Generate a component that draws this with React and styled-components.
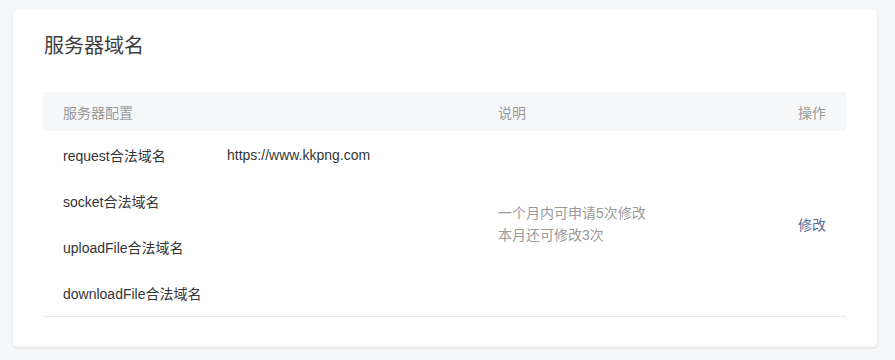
import React from "react";
import styled, { createGlobalStyle } from "styled-components";

const GlobalStyle = createGlobalStyle`
  html, body {
    margin: 0;
    padding: 0;
    background: #f6f7f9;
  }
  body {
    font-family: "Liberation Sans", "Noto Sans CJK SC", sans-serif;
    color: #353535;
  }
`;

const domains = [
  { name: "request合法域名", value: "https://www.kkpng.com" },
  { name: "socket合法域名", value: "" },
  { name: "uploadFile合法域名", value: "" },
  { name: "downloadFile合法域名", value: "" },
];

const Page = styled.div`
  padding: 10px 18px 13px 13px;
`;

const Card = styled.div`
  background: #fff;
  border-radius: 4px;
  box-shadow: 0 1px 2px rgba(150, 150, 150, 0.3);
  padding: 24px 31px 30px 30px;
`;

const Title = styled.h2`
  margin: 0 0 34px 1px;
  font-size: 20px;
  font-weight: 400;
  line-height: 24px;
  color: #3e3e3e;
`;

const HeadRow = styled.div`
  display: flex;
  align-items: center;
  height: 39px;
  background: #f6f7f9;
  font-size: 14px;
  color: #9a9a9a;
`;

const BodyRow = styled.div`
  display: flex;
  align-items: center;
  padding-top: 1px;
  border-bottom: 1px solid #e7e7eb;
  font-size: 14px;
`;

const Cell = styled.div`
  padding: 0 20px;
  box-sizing: border-box;
  width: ${(p) => (p.$width ? `${p.$width}px` : "auto")};
  flex: ${(p) => (p.$grow ? 1 : "none")};
  text-align: ${(p) => (p.$right ? "right" : "left")};
`;

const DomainList = styled.div`
  display: flex;
  flex-direction: column;
`;

const DomainRow = styled.div`
  display: flex;
  align-items: center;
  height: 46px;
  color: #353535;
`;

const DomainName = styled.span`
  width: 164px;
  flex: none;
`;

const Desc = styled.div`
  color: #9a9a9a;
  font-size: 14px;
  line-height: 22px;
`;

const Link = styled.a`
  color: #576b95;
  text-decoration: none;
  cursor: pointer;
`;

export default function App() {
  return (
    <Page>
      <GlobalStyle />
      <Card>
        <Title>服务器域名</Title>
        <HeadRow>
          <Cell $width={435}>服务器配置</Cell>
          <Cell $grow>说明</Cell>
          <Cell $right>操作</Cell>
        </HeadRow>
        <BodyRow>
          <Cell $width={435}>
            <DomainList>
              {domains.map((d) => (
                <DomainRow key={d.name}>
                  <DomainName>{d.name}</DomainName>
                  <span>{d.value}</span>
                </DomainRow>
              ))}
            </DomainList>
          </Cell>
          <Cell $grow>
            <Desc>
              一个月内可申请5次修改
              <br />
              本月还可修改3次
            </Desc>
          </Cell>
          <Cell $right>
            <Link>修改</Link>
          </Cell>
        </BodyRow>
      </Card>
    </Page>
  );
}
